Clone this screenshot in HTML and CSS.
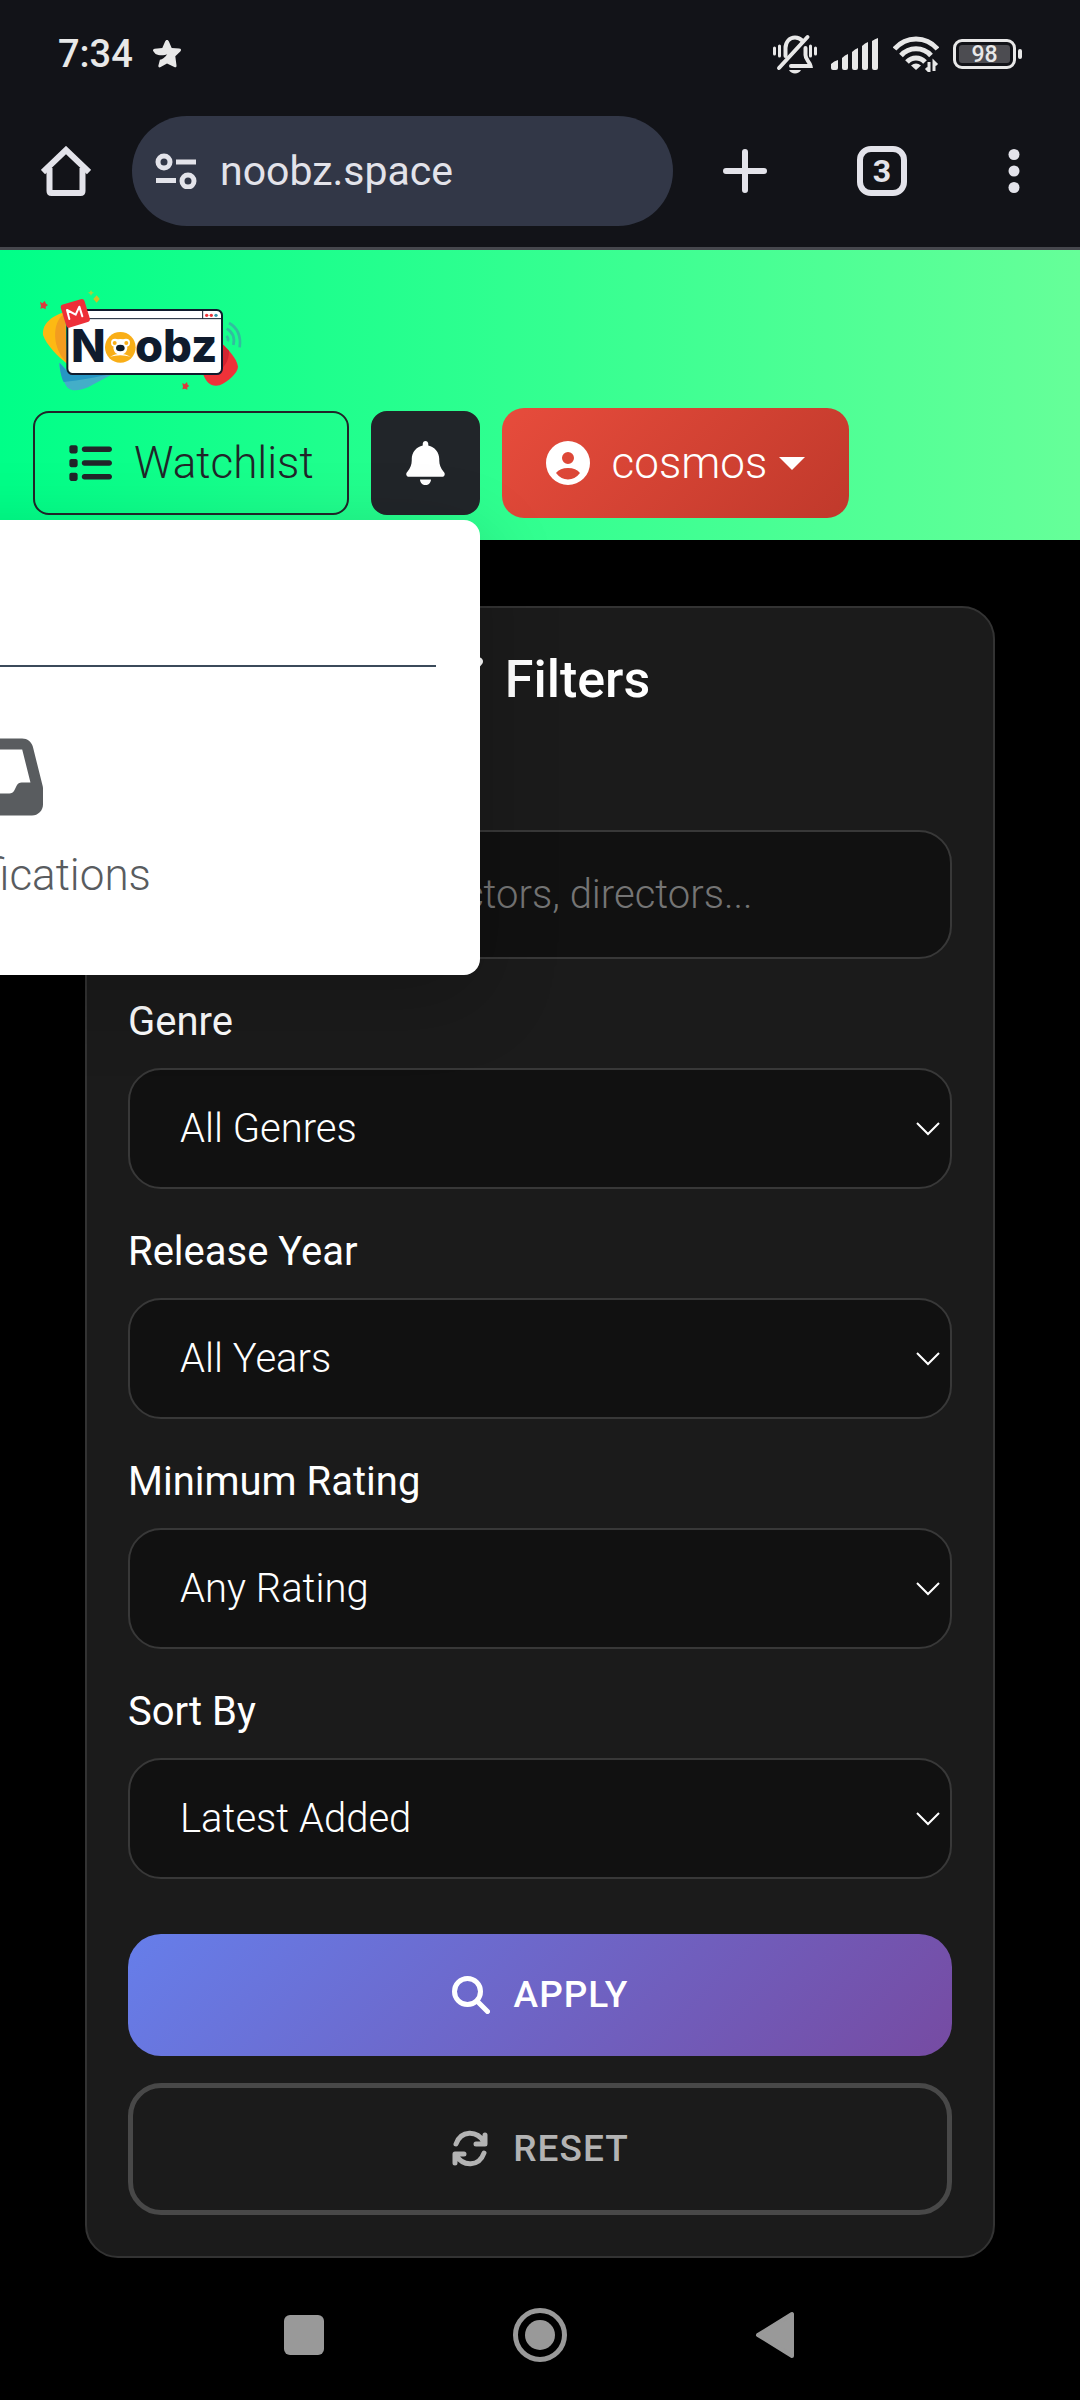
FILE: index.html
```html
<!DOCTYPE html>
<html lang="en">
<head>
<meta charset="utf-8">
<meta name="viewport" content="width=device-width, initial-scale=1">
<title>Noobz</title>
<link rel="stylesheet" href="styles.css">
</head>
<body>
<div class="chrome">
  <div class="status-bar">
    <span class="clock">7:34</span>
    <svg class="star" width="28" height="28" viewBox="0 0 28 28" fill="#e8e8e8"><path d="M14 0c1 0 1.500.700 1.900 1.600l2.800 6.300 7.600.700c2 .200 2.200 1.700 1 2.800l-5 4.800 1.200 9.300c.100 1.700-.900 2.200-2.200 1.400L14 23.500l-6.300 3.600c-1.600.800-2.600 0-2.300-1.500l1.500-5.800c2.300-.600 5.500-2.600 7.300-5.600-3 1.600-8.600 1.500-11.600-.100L.700 11.700c-1.200-1.100-1-2.600.900-2.900l7.700-.900 2.800-6.300C12.500.700 13 0 14 0z"/></svg>
    <div class="status-icons">
      <svg class="mute" width="44" height="40" viewBox="0 0 44 40" fill="none" stroke="#e8e8e8" stroke-linecap="round">
        <path d="M1.500 14v6M6.500 12v10M37.500 12v10M42.500 14v6" stroke-width="3"/>
        <path d="M12.500 22v-8c0-6 4-10.500 9.500-10.500 3 0 5.500 1.200 7.300 3.200M32.500 14v7c0 5 4 6 5 11H18" stroke-width="4"/>
        <path d="M34.500 3L6 34" stroke-width="4"/>
        <path d="M16 36h12c-2 4.500-10 4.500-12 0z" fill="#e8e8e8" stroke="none"/>
      </svg>
      <svg class="signal" width="48" height="32" viewBox="0 0 48 32" fill="#e8e8e8"><path d="M0 26q3-3 7-4v8q0 2-2 2H2q-2 0-2-2zM11 20q3-3 6-4v14q0 2-2 2h-2q-2 0-2-2zM21 14q3-3 6-4v20q0 2-2 2h-2q-2 0-2-2zM31 8q3-3 6-4v26q0 2-2 2h-2q-2 0-2-2zM41 3q3-2 6-3v30q0 2-2 2h-2q-2 0-2-2z"/></svg>
      <svg class="wifi" width="46" height="36" viewBox="0 0 46 36" fill="none" stroke="#e8e8e8" stroke-width="5"><path d="M1.500 13C13-.500 33-.500 44.500 13M8 19.500c8-9 22-9 30 0M14 26c5-5.500 13-5.500 18 0"/><path d="M23 34l-5-4.500q5-4 10 0z" fill="#e8e8e8" stroke="none"/><path d="M36 26v9l-3-3M41 35v-9l3 3" stroke-width="3"/></svg>
      <span class="battery"><span class="battery-level">98</span></span>
    </div>
  </div>
  <div class="toolbar">
    <button class="tool" type="button" aria-label="Home"><svg width="50" height="50" viewBox="0 0 50 50" fill="none" stroke="#e3e3ea" stroke-width="6" stroke-linejoin="round"><path d="M8.500 22v23q0 2 2 2h29q2 0 2-2V22"/><path d="M2 26L25 4l23 22" stroke-linejoin="miter"/></svg></button>
    <div class="address">
      <svg width="42" height="36" viewBox="0 0 42 36" fill="none" stroke="#e3e3ea" stroke-width="5"><circle cx="9" cy="9" r="6"/><circle cx="33" cy="28" r="6"/><path d="M21 9h20M1 27.500h20"/></svg>
      <input class="address-input" type="text" value="noobz.space" aria-label="Address">
    </div>
    <button class="tool tool-new" type="button" aria-label="New tab"><svg width="44" height="44" viewBox="0 0 44 44" stroke="#e3e3ea" stroke-width="6" stroke-linecap="round"><path d="M22 3v38M3 22h38"/></svg></button>
    <button class="tool tool-tabs" type="button" aria-label="Open tabs">3</button>
    <button class="tool tool-more" type="button" aria-label="More"><svg width="12" height="44" viewBox="0 0 12 44" fill="#e3e3ea"><circle cx="6" cy="5.500" r="5.500"/><circle cx="6" cy="22" r="5.500"/><circle cx="6" cy="38.500" r="5.500"/></svg></button>
  </div>
</div>

<header class="site-header">
  <a class="brand" href="#" aria-label="Noobz">
    <svg width="217" height="110" viewBox="99 129 651 330">
      <path d="M195 215C165 225 125 245 129 285c10 30 45 65 72 86z" fill="#fdb913"/>
      <path d="M195 220c-35 20-40 85-10 130l16 20z" fill="#f39c1f"/>
      <path d="M179 368c-5 10 10 60 25 76 15 14 45 4 60-2l70-38-130-10z" fill="#43aec8"/>
      <path d="M179 368c0 20 5 45 12 58 50-5 100-15 140-24l-130-8z" fill="#2696c4"/>
      <path d="M665 310c20 20 45 45 49 70 0 18-30 45-55 56-25 6-40-8-50-34z" fill="#ee3239"/>
      <path d="M665 310l22 22c0 40-20 65-76 74l54-8z" fill="#d42330"/>
      <rect x="202" y="210" width="464" height="192" rx="16" fill="#fff" stroke="#0f1b2d" stroke-width="6"/>
      <path d="M205 236h458M608 210v26" stroke="#0f1b2d" stroke-width="3"/>
      <circle cx="620" cy="226" r="5" fill="#ee3239"/><circle cx="634" cy="226" r="5" fill="#ee3239"/><circle cx="648" cy="226" r="5" fill="#3b98ad"/>
      <rect x="189" y="184" width="74" height="72" rx="9" transform="rotate(-17 226 220)" fill="#ee2f38"/>
      <path d="M208 237l-7-27 26 14 11-24 9 29" fill="none" stroke="#fff" stroke-width="6" stroke-linejoin="round" stroke-linecap="round"/>
      <text class="logo-text" x="213" y="365">N</text>
      <text class="logo-text" x="405" y="365">obz</text>
      <circle cx="361" cy="322" r="46" fill="#f9ae17"/>
      <g fill="#fff"><circle cx="345" cy="308" r="12"/><circle cx="378" cy="308" r="12"/><path d="M345 300q16-6 33 0l4 25q-3 19-21 19t-21-19zM330 350q30-18 62 0-31-9-62 0z"/></g>
      <circle cx="344" cy="309" r="6" fill="#f9ae17"/><circle cx="379" cy="309" r="6" fill="#f9ae17"/>
      <ellipse cx="361" cy="324" rx="13" ry="10" fill="#0f1b2d"/>
      <path d="M120 185l7 5 7-7 4 8 6 4-7 5 0 8-8-4-8 2 2-8z" fill="#dc3a3c"/>
      <path d="M547 429l7 4 7-7 2 8 5 4-6 4 0 7-7-3-8 2 2-8z" fill="#dc3a3c"/>
      <path d="M290 166l9 11-9 11-10-11z" fill="#d6bd25"/><path d="M273 150l3 6 6 2-6 3-3 6-3-6-6-3 6-2z" fill="#a6d33e"/>
      <g fill="none" stroke="#32bda0" stroke-width="8"><path d="M679 288q8 6 4 16M680 266q28 16 20 49M687 249q39 22 32 73"/></g>
    </svg>
  </a>
  <nav class="nav-row">
    <a class="btn watchlist" href="#">
      <svg width="44" height="44" viewBox="0 0 512 512" fill="#212529"><path d="M40 48C26.700 48 16 58.700 16 72v48c0 13.300 10.700 24 24 24H88c13.300 0 24-10.700 24-24V72c0-13.300-10.700-24-24-24H40zM192 64c-17.700 0-32 14.300-32 32s14.300 32 32 32H480c17.700 0 32-14.300 32-32s-14.300-32-32-32H192zm0 160c-17.700 0-32 14.300-32 32s14.300 32 32 32H480c17.700 0 32-14.300 32-32s-14.300-32-32-32H192zm0 160c-17.700 0-32 14.300-32 32s14.300 32 32 32H480c17.700 0 32-14.300 32-32s-14.300-32-32-32H192zM16 232v48c0 13.300 10.700 24 24 24H88c13.300 0 24-10.700 24-24V232c0-13.300-10.700-24-24-24H40c-13.300 0-24 10.700-24 24zM40 368c-13.300 0-24 10.700-24 24v48c0 13.300 10.700 24 24 24H88c13.300 0 24-10.700 24-24V392c0-13.300-10.700-24-24-24H40z"/></svg>
      Watchlist
    </a>
    <div class="notify">
      <button class="btn bell" type="button" aria-label="Notifications" aria-expanded="true"><svg width="39" height="44" viewBox="0 0 448 512" fill="#fff"><path d="M224 0c-17.700 0-32 14.300-32 32V51.200C119 66 64 130.600 64 208v18.800c0 47-17.300 92.400-48.500 127.600l-7.400 8.300c-8.400 9.400-10.400 22.900-5.300 34.400S19.400 416 32 416H416c12.600 0 24-7.400 29.200-18.900s3.100-25-5.300-34.400l-7.400-8.300C401.300 319.200 384 273.900 384 226.800V208c0-77.400-55-142-128-156.800V32c0-17.700-14.300-32-32-32zm45.300 493.300c12-12 18.700-28.300 18.700-45.300H160c0 17 6.700 33.300 18.700 45.300s28.300 18.700 45.300 18.700s33.300-6.700 45.300-18.700z"/></svg></button>
      <div class="notify-menu">
        <hr class="notify-rule">
        <div class="notify-empty">
          <svg width="88" height="88" viewBox="0 0 512 512" fill="#595c5f"><path d="M121 32C91.600 32 66 52 58.900 80.500L1.900 308.400C.600 313.500 0 318.700 0 323.900V416c0 35.300 28.700 64 64 64H448c35.300 0 64-28.700 64-64V323.900c0-5.200-.600-10.400-1.900-15.500l-57-227.900C446 52 420.400 32 391 32H121zm0 64H391l48 192H387.800c-12.100 0-23.200 6.800-28.600 17.700l-14.300 28.600c-5.400 10.800-16.500 17.700-28.600 17.700H195.800c-12.100 0-23.200-6.800-28.600-17.700l-14.300-28.600c-5.400-10.800-16.500-17.700-28.600-17.700H73L121 96z"/></svg>
          <p class="notify-text">No notifications</p>
        </div>
      </div>
    </div>
    <button class="btn user" type="button">
      <svg width="44" height="44" viewBox="0 0 44 44"><path fill="#fff" fill-rule="evenodd" d="M22 0a22 22 0 1 0 0 44a22 22 0 1 0 0-44zM22 11a6 6 0 1 1 0 12a6 6 0 1 1 0-12zM10 32Q14 27 22 27T34 32Q29 38.500 22 38.500T10 32z"/></svg>
      <span class="user-name">cosmos<svg width="26" height="13" viewBox="0 0 26 13" fill="#fff"><path d="M0 0h26L13 13z"/></svg></span>
    </button>
  </nav>
</header>

<main class="page">
  <form class="card">
    <h1 class="title"><svg width="53" height="53" viewBox="0 0 512 512" fill="#fff"><path d="M3.900 54.900C10.500 40.900 24.500 32 40 32H472c15.500 0 29.500 8.900 36.100 22.900s4.600 30.500-5.200 42.500L320 320.900V448c0 12.100-6.800 23.200-17.700 28.600s-23.800 4.300-33.500-3l-64-48c-8.100-6-12.800-15.500-12.800-25.600V320.900L9 97.300C-.700 85.400-2.800 68.800 3.900 54.900z"/></svg>Filters</h1>
    <div class="field">
      <label class="label" for="search">Search</label>
      <input class="control search" id="search" type="text" placeholder="Search movies, actors, directors...">
    </div>
    <div class="field">
      <label class="label" for="genre">Genre</label>
      <div class="select-wrap"><select class="control" id="genre"><option>All Genres</option></select><svg class="chevron" width="24" height="14" viewBox="0 0 24 14"><path d="M1 1l11 11L23 1"/></svg></div>
    </div>
    <div class="field">
      <label class="label" for="year">Release Year</label>
      <div class="select-wrap"><select class="control" id="year"><option>All Years</option></select><svg class="chevron" width="24" height="14" viewBox="0 0 24 14"><path d="M1 1l11 11L23 1"/></svg></div>
    </div>
    <div class="field">
      <label class="label" for="rating">Minimum Rating</label>
      <div class="select-wrap"><select class="control" id="rating"><option>Any Rating</option></select><svg class="chevron" width="24" height="14" viewBox="0 0 24 14"><path d="M1 1l11 11L23 1"/></svg></div>
    </div>
    <div class="field">
      <label class="label" for="sort">Sort By</label>
      <div class="select-wrap"><select class="control" id="sort"><option>Latest Added</option></select><svg class="chevron" width="24" height="14" viewBox="0 0 24 14"><path d="M1 1l11 11L23 1"/></svg></div>
    </div>
    <div class="actions">
      <button class="action apply" type="submit"><svg width="38" height="38" viewBox="0 0 38 38" fill="none" stroke="#fff" stroke-width="5" stroke-linecap="round"><circle cx="15.500" cy="15.500" r="13"/><path d="M25 25l10.500 10.500"/></svg>Apply</button>
      <button class="action reset" type="reset"><svg width="38" height="38" viewBox="0 0 38 38" fill="none" stroke="#b3b3b3" stroke-width="5" stroke-linecap="round" stroke-linejoin="round"><path d="M5 14C10 0 26 0 33 12M34 5v9h-9M33 23C28 37 12 37 5 25M4 33v-9h9"/></svg>Reset</button>
    </div>
  </form>
</main>

<nav class="system-nav" aria-label="System">
  <button class="tool" type="button" aria-label="Recent apps"><svg width="54" height="54" viewBox="0 0 54 54" fill="#999"><rect x="7" y="7" width="40" height="40" rx="6"/></svg></button>
  <button class="tool" type="button" aria-label="Home screen"><svg width="54" height="54" viewBox="0 0 54 54" fill="#999"><circle cx="27" cy="27" r="24.500" fill="none" stroke="#999" stroke-width="5"/><circle cx="27" cy="27" r="15"/></svg></button>
  <button class="tool" type="button" aria-label="Back"><svg width="54" height="54" viewBox="0 0 54 54" fill="#999" stroke="#999" stroke-width="4" stroke-linejoin="round"><path d="M9 27L43 6v42z"/></svg></button>
</nav>
</body>
</html>
```
FILE: styles.css
```css
* {
  box-sizing: border-box;
}

body {
  margin: 0;
  min-height: 100vh;
  display: flex;
  flex-direction: column;
  overflow-x: hidden;
  background: #000;
  color: #fff;
  font-family: Roboto, sans-serif;
  font-size: 40px;
  line-height: 60px;
}

button,
input,
select {
  font: inherit;
  color: inherit;
}

svg {
  display: block;
  flex: none;
}

/* Browser chrome */
.chrome {
  background: #121318;
  border-bottom: 3px solid #46474d;
}

.status-bar {
  display: flex;
  align-items: center;
  gap: 20px;
  height: 108px;
  padding: 0 58px;
  color: #e8e8e8;
}

.clock {
  font-size: 38px;
  font-weight: 500;
}

.status-icons {
  display: flex;
  align-items: center;
  gap: 14px;
  margin-left: auto;
}

.battery {
  position: relative;
  width: 63px;
  height: 30px;
  padding: 3px;
  margin-right: 6px;
  border: 3px solid #e8e8e8;
  border-radius: 9px;
}

.battery::after {
  content: "";
  position: absolute;
  top: 7px;
  right: -9px;
  width: 4px;
  height: 10px;
  border-radius: 2px;
  background: #e8e8e8;
}

.battery-level {
  display: block;
  height: 18px;
  border-radius: 3px;
  background: #4c4c51;
  font-size: 23px;
  font-weight: 500;
  line-height: 20px;
  text-align: center;
}

.toolbar {
  display: flex;
  align-items: center;
  padding: 8px 60px 21px 41px;
}

.tool {
  display: flex;
  padding: 0;
  border: 0;
  background: none;
}

.address {
  flex: 1;
  display: flex;
  align-items: center;
  gap: 23px;
  min-width: 0;
  height: 110px;
  margin: 0 50px 0 41px;
  padding: 0 23px;
  border-radius: 55px;
  background: #323747;
}

.address-input {
  flex: 1;
  min-width: 0;
  padding: 0;
  border: 0;
  outline: 0;
  background: none;
  color: #e3e3ea;
  font-size: 41px;
}

.tool-tabs {
  align-items: center;
  justify-content: center;
  width: 50px;
  height: 50px;
  margin: 0 101px 0 90px;
  border: 6px solid #e3e3ea;
  border-radius: 14px;
  color: #e3e3ea;
  font-size: 32px;
  font-weight: 700;
  line-height: 38px;
}

/* Site header */
.site-header {
  display: flex;
  flex-direction: column;
  gap: 15px;
  padding: 33px 33px 22px;
  background: linear-gradient(90deg, #00ff88, #66ff99);
}

.brand {
  align-self: flex-start;
}

.logo-text {
  font-family: Inter, sans-serif;
  font-size: 136px;
  font-weight: 800;
  fill: #0f1b2d;
}

.nav-row {
  display: flex;
  align-items: center;
  gap: 22px;
}

.btn {
  display: flex;
  align-items: center;
  gap: 22px;
  height: 104px;
  padding: 0 33px;
  border: 2px solid #212529;
  border-radius: 16px;
  font-size: 44px;
  font-weight: 300;
  text-decoration: none;
}

.watchlist {
  color: #212529;
}

.bell {
  background: #212529;
}

.user {
  height: 110px;
  padding: 0 44px;
  border: 0;
  border-radius: 22px;
  background: linear-gradient(135deg, #e74c3c, #c0392b);
}

.user-name {
  display: flex;
  align-items: center;
  gap: 12px;
}

.notify {
  position: relative;
}

.notify-menu {
  position: absolute;
  top: calc(100% + 5px);
  right: 0;
  width: 962px;
  height: 455px;
  padding: 145px 44px 0;
  border-radius: 16px;
  background: #fff;
  box-shadow: 0 22px 82px rgba(0, 0, 0, 0.2);
}

.notify-rule {
  margin: 0 0 66px;
  border: 0;
  border-top: 2px solid #3b4a5a;
}

.notify-empty {
  display: flex;
  flex-direction: column;
  align-items: center;
  gap: 24px;
}

.notify-text {
  margin: 0;
  color: #595c5f;
  font-size: 44px;
  font-weight: 300;
}

/* Filters */
.page {
  padding: 66px 85px 0;
}

.card {
  padding: 41px;
  border: 2px solid #333;
  border-radius: 33px;
  background: #1b1b1b;
}

.title {
  display: flex;
  align-items: center;
  justify-content: center;
  gap: 22px;
  margin: 0 0 42px;
  font-size: 52px;
  font-weight: 500;
  line-height: 62px;
}

.field {
  display: flex;
  flex-direction: column;
  gap: 16px;
  margin-bottom: 33px;
}

.field:first-of-type .label {
  padding-bottom: 1px;
}

.select-wrap {
  display: grid;
  align-items: center;
}

.control {
  grid-area: 1 / 1;
  width: 100%;
  height: 121px;
  padding: 0 50px;
  border: 2px solid #383838;
  border-radius: 33px;
  outline: 0;
  background: #111;
  font-weight: 300;
  appearance: none;
}

.search {
  height: 129px;
  padding: 0 36px;
}

.search::placeholder {
  color: #757575;
  opacity: 1;
}

.chevron {
  grid-area: 1 / 1;
  justify-self: end;
  margin-right: 12px;
  fill: none;
  stroke: #fff;
  stroke-width: 2;
  pointer-events: none;
}

.actions {
  display: flex;
  flex-direction: column;
  gap: 27px;
  padding-top: 22px;
}

.action {
  display: flex;
  align-items: center;
  justify-content: center;
  gap: 24px;
  height: 122px;
  border: 0;
  border-radius: 33px;
  font-size: 37px;
  font-weight: 500;
  letter-spacing: 1px;
  text-transform: uppercase;
}

.apply {
  background: linear-gradient(135deg, #667eea, #764ba2);
}

.reset {
  height: 132px;
  border: 5px solid #484848;
  background: transparent;
  color: #b3b3b3;
}

.system-nav {
  display: flex;
  justify-content: center;
  gap: 182px;
  margin-top: auto;
  padding: 49px 0 38px;
}
```
